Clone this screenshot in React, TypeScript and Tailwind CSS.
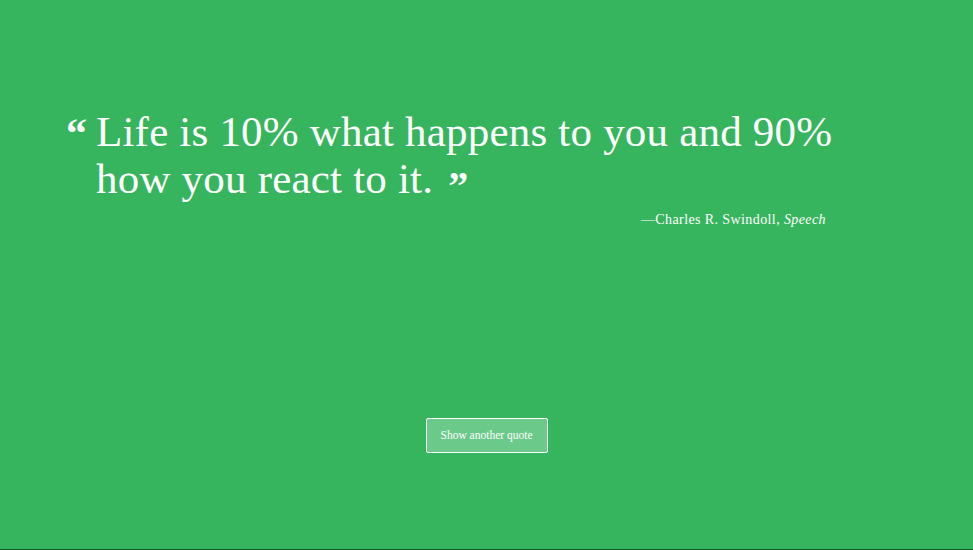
export default function App() {
  return (
    <div className="flex h-[550px] w-full flex-col bg-[#37b55e] font-['Liberation_Serif',serif] text-white border-b border-[#14532d]">
      <div className="flex flex-col pl-[66px] pr-[120px] pt-[108px]">
        <blockquote className="flex items-start">
          <span className="mt-[5px] w-[30px] shrink-0 text-[42px] leading-[40px] font-bold">“</span>
          <p className="text-[43px] leading-[47px] tracking-[0.2px]">
            Life is 10% what happens to you and 90% how you react to it.{' '}
            <span className="relative top-[6px] ml-[4px] text-[40px] font-bold leading-none">”</span>
          </p>
        </blockquote>
        <p className="mt-[7px] pr-[27px] text-right text-[14px] tracking-[0.4px]">
          —Charles R. Swindoll, <cite className="italic">Speech</cite>
        </p>
      </div>
      <div className="mt-[188px] flex justify-center">
        <button className="h-[35px] w-[122px] rounded-[2px] border border-white bg-[#6bc98a] text-[11.5px] text-white">
          Show another quote
        </button>
      </div>
    </div>
  )
}
